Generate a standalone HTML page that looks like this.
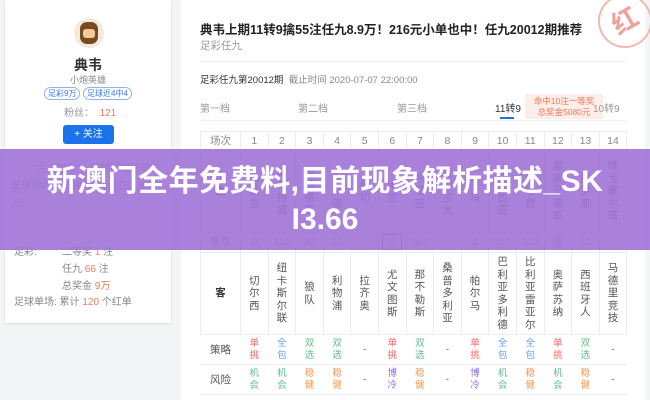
<!DOCTYPE html>
<html><head><meta charset="utf-8"><style>
*{margin:0;padding:0;box-sizing:border-box}
body{width:650px;height:400px;overflow:hidden;background:#f4f5f7;font-family:"Liberation Sans","Noto Sans CJK SC",sans-serif;color:#333;position:relative}
.card{position:absolute;background:#fff}
.abs{position:absolute;white-space:nowrap}
table{position:absolute;left:200px;top:131px;border-collapse:collapse;table-layout:fixed;width:426px}
td{border:1px solid #ececec;text-align:center;font-size:10.5px;color:#555;line-height:12.5px;padding:0}
.h td{height:19px;color:#888}
.t td{height:82px}
.r td{height:20px;color:#e88}
.s td{height:30px;font-size:9.5px;line-height:12px;border-left:none;border-right:none}
.red{color:#f66}.blu{color:#6a9ef0}.grn{color:#5cc08a}.org{color:#f5974e}.pur{color:#8b6ef0}
</style></head><body>
<div class="card" style="left:5px;top:0;width:166px;height:323px;box-shadow:0 1px 3px #ddd"></div>
<div class="abs" style="left:74px;top:18px;width:30px;height:30px;border-radius:50%;background:#f3eadf"></div>
<div class="abs" style="left:80px;top:22px;width:18px;height:22px;border-radius:7px;background:#7b4a1c"></div>
<div class="abs" style="left:83px;top:29px;width:12px;height:9px;background:#f2c99c;border-radius:3px"></div>
<div class="abs" style="left:0;width:176px;top:55px;text-align:center;font-size:14px;font-weight:bold">典韦</div>
<div class="abs" style="left:0;width:176px;top:73px;text-align:center;font-size:9px;color:#888">小炮英雄</div>
<div class="abs" style="left:44px;top:87px;font-size:8px;color:#3c7be8;border:1px solid #8fb3f0;border-radius:8px;padding:0 3px;line-height:11px">足彩9万</div>
<div class="abs" style="left:83px;top:87px;font-size:8px;color:#3c7be8;border:1px solid #8fb3f0;border-radius:8px;padding:0 3px;line-height:11px">足球近4中4</div>
<div class="abs" style="left:64px;top:104px;font-size:10px;color:#999">粉丝： <span style="color:#f37b5c">&nbsp;121</span></div>
<div class="abs" style="left:63px;top:125px;width:51px;height:19px;background:#1a73e8;border-radius:3px;color:#fff;font-size:10px;text-align:center;line-height:19px">+ 关注</div>
<div class="abs" style="left:33px;top:160px;font-size:10px;color:#999">"古之恶来"，曾转彩智能英雄</div>
<div class="abs" style="left:11px;top:177px;font-size:10px;color:#999">曾预测命中11转9，55注任九8.9</div>
<div class="abs" style="left:11px;top:194px;font-size:10px;color:#999">万!</div>
<div class="abs" style="left:14px;top:243px;font-size:10px;color:#888">足彩:</div>
<div class="abs" style="left:62px;top:243px;font-size:10px;color:#888">二等奖 <span style="color:#f37b5c">1</span> 注</div>
<div class="abs" style="left:62px;top:260px;font-size:10px;color:#888">任九 <span style="color:#f37b5c">66</span> 注</div>
<div class="abs" style="left:62px;top:277px;font-size:10px;color:#888">总奖金 <span style="color:#f37b5c">9万</span></div>
<div class="abs" style="left:14px;top:293px;font-size:10px;color:#888">足球单场: 累计 <span style="color:#f37b5c">120</span> 个红单</div>

<div class="card" style="left:181px;top:0;width:464px;height:400px"></div>
<div class="abs" style="left:200px;top:19px;font-size:12.5px;font-weight:bold;color:#222">典韦上期11转9擒55注任九8.9万！216元小单也中！任九20012期推荐</div>
<div class="abs" style="left:200px;top:38px;font-size:10.5px;color:#999">足彩任九</div>
<div class="abs" style="left:200px;top:61px;width:426px;border-top:1px solid #eee"></div>
<div class="abs" style="left:200px;top:72px;font-size:9.5px;color:#333">足彩任九第20012期 <span style="color:#888">&nbsp;截止时间 2020-07-07 22:00:00</span></div>
<div class="abs" style="left:200px;top:100px;font-size:10px;color:#999">第一档</div>
<div class="abs" style="left:298px;top:100px;font-size:10px;color:#999">第二档</div>
<div class="abs" style="left:397px;top:100px;font-size:10px;color:#999">第三档</div>
<div class="abs" style="left:495px;top:100px;font-size:10px;color:#333">11转9</div>
<div class="abs" style="left:500px;top:117px;width:14px;height:2px;background:#1a73e8"></div>
<div class="abs" style="left:525px;top:94px;width:78px;height:25px;background:#fdeeea;color:#f37b5c;font-size:8.5px;line-height:11px;text-align:center;padding-top:2px">命中10注一等奖<br>总奖金5080元</div>
<div class="abs" style="left:593px;top:100px;font-size:10px;color:#999">10转9</div>
<div class="abs" style="left:200px;top:120px;width:426px;border-top:1px solid #eee"></div>
<div class="abs" style="left:598px;top:-6px;width:54px;height:54px;border-radius:50%;border:2px solid #f4b8b3;color:#f0a09a;font-size:26px;font-weight:bold;text-align:center;line-height:50px;transform:rotate(-30deg)">红</div>

<table>
<colgroup><col style="width:40px"><col span="14" style="width:27.6px"></colgroup>
<tr class="h"><td>场次</td><td>1</td><td>2</td><td>3</td><td>4</td><td>5</td><td>6</td><td>7</td><td>8</td><td>9</td><td>10</td><td>11</td><td>12</td><td>13</td><td>14</td></tr>
<tr class="t"><td style="color:#333;font-weight:bold">主</td><td>水<br>晶<br>宫</td><td>莱<br>斯<br>特<br>城</td><td>谢<br>菲<br>德<br>联</td><td>布<br>莱<br>顿</td><td>曼<br>切</td><td>米<br>兰</td><td>热<br>那<br>亚</td><td>亚<br>特<br>兰<br>大</td><td>罗<br>马</td><td>布<br>雷<br>西<br>亚</td><td>赫<br>塔<br>费</td><td>皇<br>家<br>贝<br>蒂<br>斯</td><td>维<br>罗<br>那</td><td>维<br>戈<br>塞<br>尔<br>塔</td></tr>
<tr class="r"><td style="color:#888">推荐</td><td>0</td><td>310</td><td>30</td><td>10</td><td>-</td><td><span style="border:1px solid #e47;padding:1px 6px">3</span></td><td>30</td><td>-</td><td style="color:#666">1</td><td>310</td><td>310</td><td><span style="background:#c6d8f7;padding:2px 1px">3</span></td><td>31</td><td>-</td></tr>
<tr class="t"><td style="color:#333;font-weight:bold">客</td><td>切<br>尔<br>西</td><td>纽<br>卡<br>斯<br>尔<br>联</td><td>狼<br>队</td><td>利<br>物<br>浦</td><td>拉<br>齐<br>奥</td><td>尤<br>文<br>图<br>斯</td><td>那<br>不<br>勒<br>斯</td><td>桑<br>普<br>多<br>利<br>亚</td><td>帕<br>尔<br>马</td><td>巴<br>利<br>亚<br>多<br>利<br>德</td><td>比<br>利<br>亚<br>雷<br>亚<br>尔</td><td>奥<br>萨<br>苏<br>纳</td><td>西<br>班<br>牙<br>人</td><td>马<br>德<br>里<br>竞<br>技</td></tr>
<tr class="s"><td style="font-size:10.5px;color:#555">策略</td><td class="red">单<br>挑</td><td class="blu">全<br>包</td><td class="grn">双<br>选</td><td class="grn">双<br>选</td><td>-</td><td class="red">单<br>挑</td><td class="grn">双<br>选</td><td>-</td><td class="red">单<br>挑</td><td class="blu">全<br>包</td><td class="blu">全<br>包</td><td class="red">单<br>挑</td><td class="grn">双<br>选</td><td>-</td></tr>
<tr class="s"><td style="font-size:10.5px;color:#555">风险</td><td class="grn">机<br>会</td><td class="grn">机<br>会</td><td class="org">稳<br>健</td><td class="org">稳<br>健</td><td>-</td><td class="pur">博<br>冷</td><td class="org">稳<br>健</td><td>-</td><td class="pur">博<br>冷</td><td class="grn">机<br>会</td><td class="org">稳<br>健</td><td class="grn">机<br>会</td><td class="org">稳<br>健</td><td>-</td></tr>
</table>

<div class="abs" style="left:0;top:149px;width:650px;height:101px;background:rgba(160,115,215,0.9)"></div>
<div class="abs" style="left:0;top:164px;width:650px;text-align:center;color:#fff;font-size:30px;font-weight:bold;line-height:36px;letter-spacing:0.5px">新澳门全年免费料,目前现象解析描述_SK</div>
<div class="abs" style="left:0;top:202px;width:650px;text-align:center;color:#fff;font-size:30px;font-weight:bold;line-height:36px">I3.66</div>
</body></html>
